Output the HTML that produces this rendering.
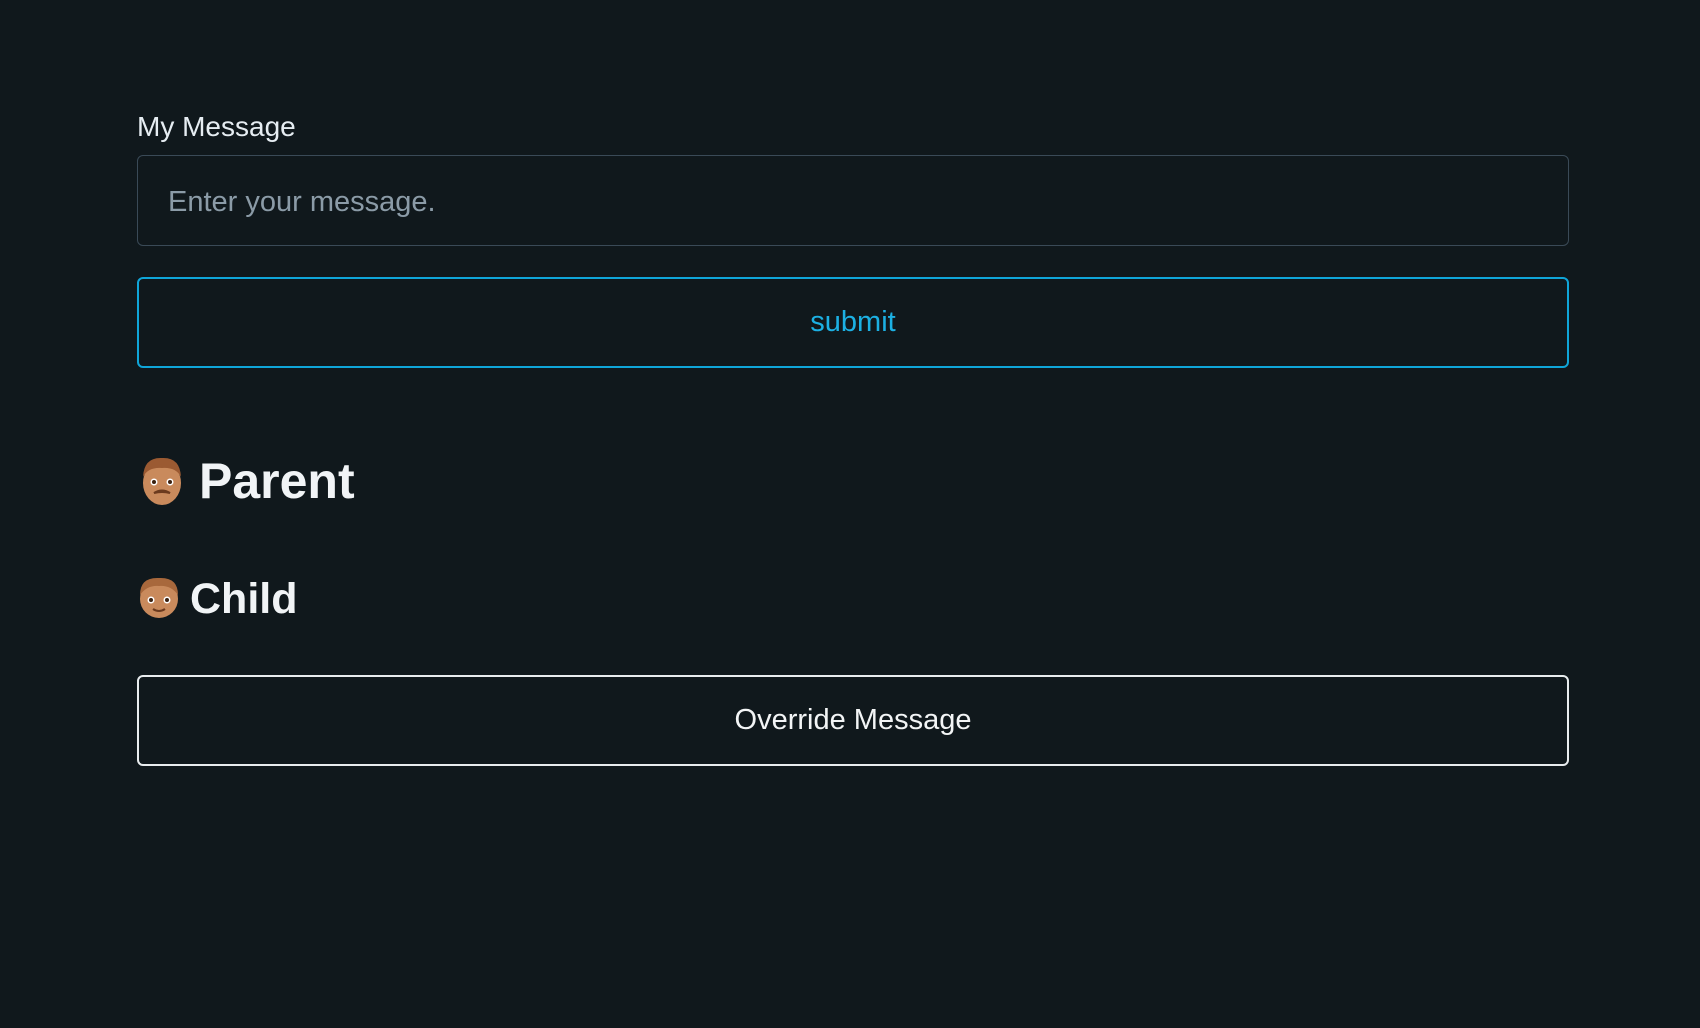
<!DOCTYPE html>
<html><head><style>
html,body{margin:0;padding:0;background:#10181c;width:1700px;height:1028px;overflow:hidden;font-family:"Liberation Sans",sans-serif}
.abs{position:absolute}
.lbl{left:137px;top:111px;font-size:28px;color:#e6edf2}
.inp{left:137px;top:155px;width:1432px;height:91px;border:1.5px solid #3a4a57;border-radius:6px;box-sizing:border-box}
.ph{left:168px;top:186px;font-size:29px;color:#8b9ba7}
.btn{left:137px;width:1432px;height:91px;border-radius:6px;box-sizing:border-box;display:flex;align-items:center;justify-content:center;font-size:29px}
.sub{top:277px;border:2px solid #0fa5d8;color:#1cb0e3}
.ovr{top:675px;border:2px solid #e8ecee;color:#f3f5f6}
.h{font-weight:bold;color:#f1f4f6}
</style></head><body>
<div class="abs lbl">My Message</div>
<div class="abs inp"></div>
<div class="abs ph">Enter your message.</div>
<div class="abs btn sub">submit</div>
<svg class="abs" style="left:140px;top:455px" width="44" height="52" viewBox="0 0 44 52">
<ellipse cx="22" cy="28" rx="19" ry="22" fill="#c98a5c"/>
<path d="M3 22 Q4 2 22 3 Q40 2 41 22 Q36 12 22 13 Q8 12 3 22Z" fill="#9b5a32"/>
<circle cx="14" cy="27" r="3.5" fill="#fff"/><circle cx="30" cy="27" r="3.5" fill="#fff"/>
<circle cx="14" cy="27" r="2" fill="#3a200f"/><circle cx="30" cy="27" r="2" fill="#3a200f"/>
<path d="M14 38 Q22 33 30 38 Q22 36 14 38Z" fill="#6b3a1e" stroke="#6b3a1e" stroke-width="2"/>
</svg>
<div class="abs h" style="left:199px;top:452px;font-size:50px">Parent</div>
<svg class="abs" style="left:137px;top:575px" width="44" height="44" viewBox="0 0 44 44">
<ellipse cx="22" cy="24" rx="19" ry="19" fill="#c98a5c"/>
<path d="M3 20 Q3 2 22 3 Q41 2 41 20 Q34 10 22 11 Q10 10 3 20Z" fill="#a8683c"/>
<circle cx="14" cy="25" r="3.5" fill="#fff"/><circle cx="30" cy="25" r="3.5" fill="#fff"/>
<circle cx="14" cy="25" r="2" fill="#3a200f"/><circle cx="30" cy="25" r="2" fill="#3a200f"/>
<path d="M16 34 Q22 38 28 34" stroke="#6b3a1e" stroke-width="2" fill="none"/>
</svg>
<div class="abs h" style="left:190px;top:575px;font-size:43px">Child</div>
<div class="abs btn ovr">Override Message</div>
</body></html>
